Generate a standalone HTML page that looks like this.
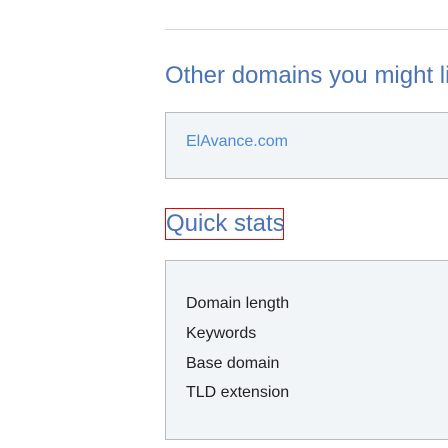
<!DOCTYPE html>
<html><head><style>
body{margin:0;width:448px;height:448px;overflow:hidden;background:#fff;font-family:"Liberation Sans",sans-serif;position:relative}
.hr{position:absolute;left:165px;top:29px;width:283px;height:1px;background:#d6d6d6}
h2{position:absolute;margin:0;font-weight:normal;color:#4a72b8;white-space:nowrap}
.box{position:absolute;left:165px;width:283px;background:#f2f5f8;border:1px solid #bbb;border-right:none;box-sizing:border-box}
.l{position:absolute;left:186px;font-size:16px;line-height:18px;white-space:nowrap}
</style></head><body>
<div class="hr"></div>
<div style="position:absolute;left:0;top:0;width:448px;height:448px;overflow:hidden">
<h2 style="left:165px;top:62px;font-size:24px;line-height:28px">Other domains you might like</h2>
</div>
<div class="box" style="top:112px;height:67px"></div>
<div class="l" style="top:133px;color:#4a8ad9">ElAvance.com</div>
<div style="position:absolute;left:165px;top:208px;width:119px;height:32px;border:1px solid #e00;box-sizing:border-box"></div>
<h2 style="left:166px;top:210px;font-size:24px;line-height:28px">Quick stats</h2>
<div class="box" style="top:260px;height:180px"></div>
<div class="l" style="top:295px;color:#222">Domain length</div>
<div class="l" style="top:325px;color:#222">Keywords</div>
<div class="l" style="top:355px;color:#222">Base domain</div>
<div class="l" style="top:384px;color:#222">TLD extension</div>
</body></html>
